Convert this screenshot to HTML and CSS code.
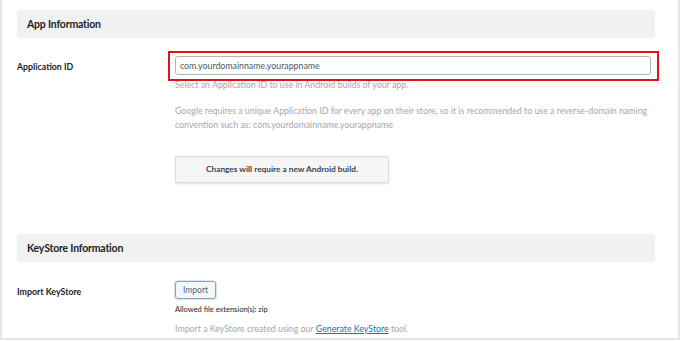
FILE: index.html
```html
<!DOCTYPE html>
<html lang="en">
<head>
    <meta charset="UTF-8">
    <title>App Settings</title>
    <link rel="stylesheet" href="styles.css">
</head>
<body>
    <div class="page">
        <h2 class="section-title">App Information</h2>

        <div class="row row-appid">
            <div class="label">Application ID</div>
            <div class="field">
                <div class="highlight">
                    <input class="text-input" type="text" value="com.yourdomainname.yourappname">
                </div>
                <p class="help help-first">Select an Application ID to use in Android builds of your app.</p>
                <p class="help help-gap">Google requires a unique Application ID for every app on their store, so it is recommended to use a reverse-domain naming convention such as: com.yourdomainname.yourappname</p>
                <div class="notice">Changes will require a new Android build.</div>
            </div>
        </div>

        <h2 class="section-title">KeyStore Information</h2>

        <div class="row row-import">
            <div class="label">Import KeyStore</div>
            <div class="field">
                <button class="import-btn">Import</button>
                <p class="allowed">Allowed file extension(s): zip</p>
                <p class="help help-last">Import a KeyStore created using our <a href="#">Generate KeyStore</a> tool.</p>
            </div>
        </div>
    </div>
</body>
</html>
```

FILE: styles.css
```css
html, body {
    margin: 0;
    padding: 0;
    background: #fff;
}
body {
    font-family: Lato, 'Open Sans', sans-serif;
    color: #1d2327;
    width: 680px;
    height: 341px;
    overflow: hidden;
}
.page {
    box-sizing: border-box;
    height: 340px;
    border: 2px solid #e6e6e6;
    border-top: none;
    padding: 10px 23px 0 15px;
}
.section-title {
    margin: 0;
    height: 28px;
    line-height: 28px;
    background: #f1f1f1;
    border-radius: 3px;
    padding-left: 10px;
    font-size: 10.5px;
    font-weight: 700;
    letter-spacing: -0.2px;
    color: #1d2327;
}
.row {
    display: flex;
}
.label {
    width: 158px;
    flex-shrink: 0;
    font-size: 8.8px;
    line-height: 13px;
    font-weight: 700;
}
.field {
    flex: 1;
    padding-right: 4px;
}
.row-appid {
    margin-top: 18px;
    margin-bottom: 51px;
}
.row-appid .label {
    margin-top: 4px;
}
.highlight {
    border: 2px solid #e0131b;
    margin: -5px -8px 0 -7px;
    padding: 3px 6px 4px 5px;
}
.text-input {
    box-sizing: border-box;
    display: block;
    width: 100%;
    height: 19px;
    border: 1px solid #b5b5b5;
    border-radius: 3px;
    padding: 0 4px;
    font-family: inherit;
    font-size: 8.8px;
    color: #50575e;
    background: #fff;
}
.help {
    margin: 0;
    font-size: 8.8px;
    line-height: 13.5px;
    color: #a4a7aa;
}
.help-first {
    margin-top: -3px;
}
.help-gap {
    margin-top: 12.5px;
}
.notice {
    width: 212px;
    height: 25px;
    margin-top: 25px;
    line-height: 25px;
    text-align: center;
    background: #f6f6f6;
    border: 1px solid #dcdcdc;
    border-radius: 2px;
    box-shadow: 0 1px 2px rgba(0, 0, 0, 0.12);
    font-size: 8.3px;
    font-weight: 700;
    color: #3c434a;
}
.row-import {
    margin-top: 19px;
}
.row-import .label {
    margin-top: 4px;
}
.import-btn {
    display: block;
    height: 18px;
    padding: 0 7px;
    border: 1px solid #8aa4bd;
    border-radius: 3px;
    background: #f6f7f7;
    font-family: inherit;
    font-size: 8.5px;
    color: #4f6a85;
    box-shadow: 0 0 0 1px #dbe4ee;
}
.allowed {
    margin: 3.5px 0 0;
    font-size: 7.5px;
    line-height: 13px;
    color: #1d2327;
}
.help-last {
    margin-top: 6.5px;
}
.help a {
    color: #2271b1;
}
```
